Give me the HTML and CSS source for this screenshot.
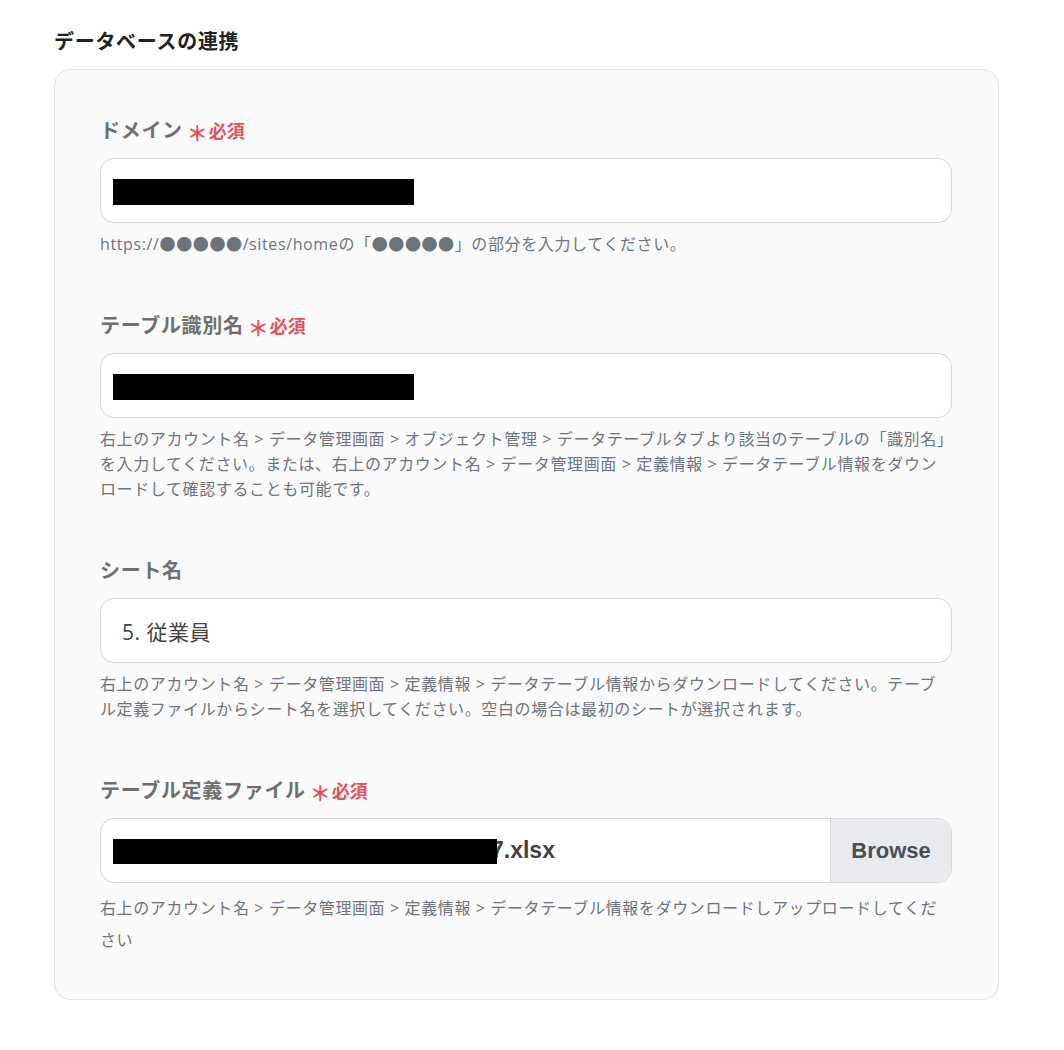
FILE: index.html
```html
<!DOCTYPE html>
<html lang="ja">
<head>
<meta charset="utf-8">
<title>データベースの連携</title>
<link rel="stylesheet" href="styles.css">
</head>
<body>
<div class="page">
  <h2 class="section-title">データベースの連携</h2>
  <div class="card">
    <div class="field">
      <div class="label">ドメイン<span class="req"><span class="ast">＊</span>必須</span></div>
      <div class="input"><span class="redact redact-short"></span></div>
      <p class="help">https://●●●●●/sites/homeの「●●●●●」の部分を入力してください。</p>
    </div>
    <div class="field">
      <div class="label">テーブル識別名<span class="req"><span class="ast">＊</span>必須</span></div>
      <div class="input"><span class="redact redact-short"></span></div>
      <p class="help">右上のアカウント名 &gt; データ管理画面 &gt; オブジェクト管理 &gt; データテーブルタブより該当のテーブルの「識別名」を入力してください。または、右上のアカウント名 &gt; データ管理画面 &gt; 定義情報 &gt; データテーブル情報をダウンロードして確認することも可能です。</p>
    </div>
    <div class="field">
      <div class="label">シート名</div>
      <div class="input"><span class="value">5. 従業員</span></div>
      <p class="help">右上のアカウント名 &gt; データ管理画面 &gt; 定義情報 &gt; データテーブル情報からダウンロードしてください。テーブル定義ファイルからシート名を選択してください。空白の場合は最初のシートが選択されます。</p>
    </div>
    <div class="field">
      <div class="label">テーブル定義ファイル<span class="req"><span class="ast">＊</span>必須</span></div>
      <div class="input file-input">
        <div class="file-name"><span class="redact redact-long"></span>7.xlsx</div>
        <div class="browse">Browse</div>
      </div>
      <p class="help help-tall">右上のアカウント名 &gt; データ管理画面 &gt; 定義情報 &gt; データテーブル情報をダウンロードしアップロードしてください</p>
    </div>
  </div>
</div>
</body>
</html>
```

FILE: styles.css
```css
* { box-sizing: border-box; }

body {
  margin: 0;
  background: #ffffff;
  font-family: "Open Sans", "Noto Sans CJK JP", sans-serif;
  color: #333;
}

.page {
  padding: 27px 0 40px 54px;
  width: 1000px;
}

.section-title {
  margin: 0 0 14px;
  font-family: "Noto Sans CJK JP", sans-serif;
  font-size: 20px;
  line-height: 28px;
  font-weight: 700;
  letter-spacing: 0.7px;
  color: #222;
}

.card {
  width: 945px;
  background: #fafafa;
  border: 1px solid #e2e3e6;
  border-radius: 16px;
  padding: 46px 46px 43px 45px;
}

.field + .field { margin-top: 54px; }

.label {
  display: flex;
  align-items: center;
  height: 28px;
  font-family: "Noto Sans CJK JP", sans-serif;
  font-size: 20px;
  line-height: 28px;
  font-weight: 700;
  letter-spacing: 0.7px;
  color: #6f6f6f;
  margin-bottom: 14px;
}

.req {
  display: inline-flex;
  align-items: center;
  margin-left: 4px;
  color: #e5525a;
  font-size: 18px;
  line-height: 28px;
  font-weight: 700;
  letter-spacing: 0;
}

.ast {
  font-size: 21px;
  line-height: 28px;
  margin-top: 4px;
  margin-right: 1px;
}

.input {
  height: 65px;
  background: #fff;
  border: 1px solid #d3d6dc;
  border-radius: 14px;
  display: flex;
  align-items: center;
  padding: 0 12px;
}

.redact {
  display: inline-block;
  background: #000;
  height: 26px;
  margin-top: 2px;
}
.redact-short { width: 301px; }
.redact-long {
  width: 384px;
  height: 25px;
  margin-right: -6px;
  position: relative;
  z-index: 1;
}

.value {
  font-family: "Open Sans", "Noto Sans CJK JP", sans-serif;
  font-size: 21px;
  letter-spacing: 0.5px;
  color: #444;
  padding-left: 9px;
}

.file-input {
  padding: 0;
  overflow: hidden;
  align-items: stretch;
}

.file-name {
  flex: 1;
  display: flex;
  align-items: center;
  padding-left: 12px;
  font-family: "Liberation Sans", sans-serif;
  font-weight: 700;
  font-size: 23px;
  color: #444;
}

.browse {
  width: 121px;
  background: #e9eaee;
  border-left: 1px solid #d3d6dc;
  display: flex;
  align-items: center;
  justify-content: center;
  font-family: "Liberation Sans", sans-serif;
  font-weight: 700;
  font-size: 22px;
  color: #4a4f57;
}

.help {
  margin: 9px 0 0;
  font-family: "Open Sans", "Noto Sans CJK JP", sans-serif;
  font-size: 16px;
  line-height: 25px;
  letter-spacing: 0.62px;
  color: #6e737b;
}

.help-tall { line-height: 32px; }
```
